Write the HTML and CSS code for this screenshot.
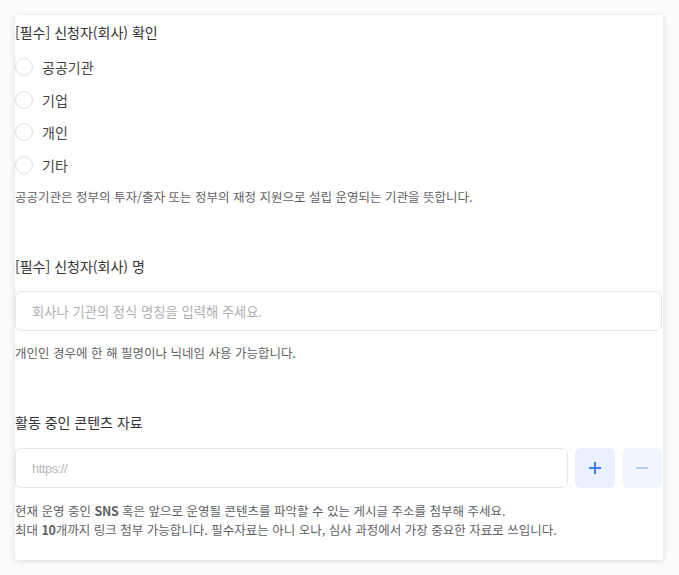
FILE: index.html
```html
<!DOCTYPE html>
<html lang="ko">
<head>
<meta charset="utf-8">
<title>신청서</title>
<link rel="stylesheet" href="styles.css">
</head>
<body>
<main class="card">
  <section class="field field-first">
    <h2 class="label">[필수] 신청자(회사) 확인</h2>
    <ul class="radios">
      <li class="radio"><span class="circle"></span><span class="radio-text">공공기관</span></li>
      <li class="radio"><span class="circle"></span><span class="radio-text">기업</span></li>
      <li class="radio"><span class="circle"></span><span class="radio-text">개인</span></li>
      <li class="radio"><span class="circle"></span><span class="radio-text">기타</span></li>
    </ul>
    <p class="help help-radios">공공기관은 정부의 투자/출자 또는 정부의 재정 지원으로 설립 운영되는 기관을 뜻합니다.</p>
  </section>

  <section class="field">
    <h2 class="label">[필수] 신청자(회사) 명</h2>
    <div class="input"><span class="placeholder">회사나 기관의 정식 명칭을 입력해 주세요.</span></div>
    <p class="help">개인인 경우에 한 해 필명이나 닉네임 사용 가능합니다.</p>
  </section>

  <section class="field">
    <h2 class="label">활동 중인 콘텐츠 자료</h2>
    <div class="url-row">
      <div class="input input-url"><span class="placeholder placeholder-url">https://</span></div>
      <button class="btn btn-add" type="button" aria-label="추가">
        <svg width="14" height="14" viewBox="0 0 14 14"><path d="M7 1v12M1 7h12" stroke="#3d7ff2" stroke-width="2" stroke-linecap="butt"/></svg>
      </button>
      <button class="btn btn-remove" type="button" aria-label="삭제">
        <svg width="14" height="14" viewBox="0 0 14 14"><path d="M1 7h12" stroke="#b3cdf6" stroke-width="2"/></svg>
      </button>
    </div>
    <p class="help help-multi">현재 운영 중인 <span class="latin">SNS</span> 혹은 앞으로 운영될 콘텐츠를 파악할 수 있는 게시글 주소를 첨부해 주세요.<br>최대 <span class="latin">10</span>개까지 링크 첨부 가능합니다. 필수자료는 아니 오나, 심사 과정에서 가장 중요한 자료로 쓰입니다.</p>
  </section>
</main>
</body>
</html>
```

FILE: styles.css
```css
* { box-sizing: border-box; }

html, body {
  margin: 0;
  padding: 0;
  background: #fbfbfb;
}

body {
  padding: 15px 16px 15px 15px;
  font-family: "Noto Sans CJK KR", "Noto Sans", sans-serif;
  color: #333;
}

.card {
  width: 648px;
  background: #fff;
  box-shadow: 0 1px 6px rgba(0, 0, 0, 0.13);
  padding: 7px 1px 21px 0;
  display: flex;
  flex-direction: column;
}

.field {
  display: flex;
  flex-direction: column;
  margin-top: 50px;
}

.field-first { margin-top: 0; }

.label {
  margin: 0;
  font-size: 14px;
  font-weight: 400;
  line-height: 20px;
  color: #333;
}

.radios {
  list-style: none;
  margin: 9px 0 0;
  padding: 0;
  display: flex;
  flex-direction: column;
}

.radio {
  height: 32.5px;
  display: flex;
  align-items: center;
  gap: 9px;
}

.circle {
  width: 18px;
  height: 18px;
  border: 1px solid #dcdcdc;
  border-radius: 50%;
  background: #fff;
  flex: none;
}

.radio-text {
  font-size: 14px;
  color: #444;
  line-height: 20px;
}

.help {
  margin: 13px 0 0;
  font-size: 12.5px;
  line-height: 18px;
  color: #5f5f66;
}

.help-radios { margin-top: 7px; }

.help-multi { line-height: 19px; margin-top: 13px; }

.latin { font-weight: 600; letter-spacing: -0.3px; }

.input {
  margin-top: 15px;
  height: 40px;
  border: 1px solid #e6e6e6;
  border-radius: 6px;
  display: flex;
  align-items: center;
  padding-left: 16px;
  background: #fff;
}

.placeholder {
  font-size: 13.3px;
  color: #b0b0b0;
}

.placeholder-url {
  font-family: "Liberation Sans", Arial, sans-serif;
  font-size: 13px;
  letter-spacing: -0.5px;
  color: #b8b8b8;
}

.url-row {
  margin-top: 16px;
  display: flex;
  gap: 7px;
}

.url-row .input { margin-top: 0; flex: 1; }

.btn {
  width: 40px;
  height: 40px;
  border: none;
  border-radius: 6px;
  padding: 0;
  display: flex;
  align-items: center;
  justify-content: center;
  flex: none;
}

.btn-add { background: #e8f1fd; }
.btn-remove { background: #f1f6fd; }
```
